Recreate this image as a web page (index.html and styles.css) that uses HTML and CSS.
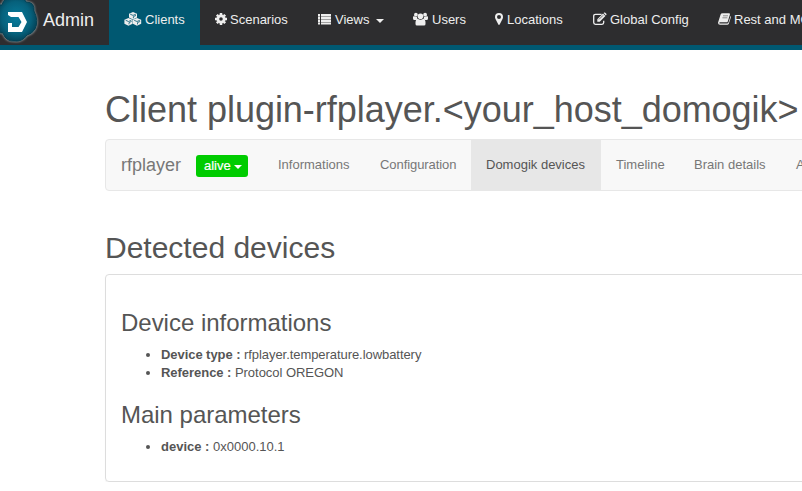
FILE: index.html
```html
<!DOCTYPE html>
<html lang="en">
<head>
<meta charset="utf-8">
<title>Domogik Admin</title>
<link rel="stylesheet" href="styles.css">
</head>
<body>
<header class="topbar">
  <a class="brand">
    <svg class="logo" viewBox="0 0 40 45" width="40" height="45">
      <defs>
        <radialGradient id="fill" cx="50%" cy="48%" r="55%"><stop offset="0" stop-color="#087c9c"/><stop offset=".65" stop-color="#06617c"/><stop offset="1" stop-color="#033e52"/></radialGradient>
        <filter id="glow" x="-20%" y="-20%" width="140%" height="140%"><feGaussianBlur stdDeviation="1.3"/></filter>
      </defs>
      <path d="M-4 7Q0 4 2 5Q4-3 12-3Q23-6 26 2Q35 2 34 11Q39 21 35 29Q32 34 27 35Q22 42 15 41Q6 42 3 33Q-2 33-4 28Z" fill="#99aeb5" stroke="#99a4a8" stroke-width="1.5" filter="url(#glow)"/>
      <path d="M-4 7Q0 4 2 5Q4-3 12-3Q23-6 26 2Q35 2 34 11Q39 21 35 29Q32 34 27 35Q22 42 15 41Q6 42 3 33Q-2 33-4 28Z" fill="url(#fill)" stroke="#043f51"/>
      <path d="M8 12H22L27 22L22 32H8V23H12V27H18.5L21.5 22L18.5 17H11L8 15Z" fill="#fff"/>
    </svg>
    <span>Admin</span>
  </a>
  <nav class="menu">
    <a class="item clients active"><svg width="18" height="14" viewBox="0 0 18 14"><g fill="#eee"><path d="M9 0L13 1.7V5.5L9 7.4L5 5.5V1.7Z"/><path d="M4.5 6L8.6 7.7V11.7L4.5 13.7L.4 11.7V7.7Z"/><path d="M13 6L17.2 7.7V11.7L13 13.7L8.9 11.7V7.7Z"/></g><path d="M6.2 2.2L9 3.4L11.8 2.2M9.4 6.3V4.6L12 3.4M1.7 8.3L4.5 9.5L7.3 8.3M5 12.4V10.6L7.6 9.4M10.2 8.3L13 9.5L15.8 8.3M13.5 12.4V10.6L16.2 9.4" fill="none" stroke="#005871" stroke-width=".8"/></svg><span>Clients</span></a>
    <a class="item scenarios"><svg width="12" height="14" viewBox="0 0 12 14"><circle cx="6" cy="7" r="3.2" fill="none" stroke="#eee" stroke-width="2.8"/><path d="M6 1V3M6 11V13M0 7H2M10 7H12M1.8 2.8L3.2 4.2M8.8 9.8L10.2 11.2M1.8 11.2L3.2 9.8M8.8 4.2L10.2 2.8" stroke="#eee" stroke-width="2.5"/></svg><span>Scenarios</span></a>
    <a class="item views"><svg width="13" height="14" viewBox="0 0 13 14"><path d="M0 2H2V4H0ZM3 2H13V4H3ZM0 5H2V7H0ZM3 5H13V7H3ZM0 8H2V10H0ZM3 8H13V10H3ZM0 11H2V12.5H0ZM3 11H13V12.5H3Z" fill="#eee"/><path d="M0 2H2V12H0ZM3 2H13V12H3Z" fill="#eee" opacity=".6"/></svg><span>Views</span><i class="caret"></i></a>
    <a class="item users"><svg width="15" height="14" viewBox="0 0 15 14"><g fill="#eee"><circle cx="2.9" cy="2.7" r="1.9"/><circle cx="12.1" cy="2.7" r="1.9"/><circle cx="7.5" cy="4.2" r="2.8"/><path d="M0 5Q0 4 1 4.2L4 5Q4 7 5 7.2Q3.5 7.3 3 8H1.5Q0 8 0 6.5ZM15 5Q15 4 14 4.2L11 5Q11 7 10 7.2Q11.5 7.3 12 8H13.5Q15 8 15 6.5ZM5 7Q7.5 8.5 10 7Q12.5 7 12.5 10.5V12Q12.5 13.5 11 13.5H4Q2.5 13.5 2.5 12V10.5Q2.5 7 5 7Z"/></g></svg><span>Users</span></a>
    <a class="item locations"><svg width="8" height="14" viewBox="0 0 8 14"><path fill-rule="evenodd" d="M4 1A4 4 0 0 0 0 5Q0 6 .5 7L3.3 12.6Q4 13.5 4.7 12.6L7.5 7Q8 6 8 5A4 4 0 0 0 4 1ZM4 3A2 2 0 1 1 4 7A2 2 0 0 1 4 3Z" fill="#eee"/></svg><span>Locations</span></a>
    <a class="item config"><svg width="14" height="14" viewBox="0 0 14 14"><path d="M8.6 2.3H2.5Q.7 2.3 .7 4V10.5Q.7 12.3 2.5 12.3H9Q10.7 12.3 10.7 10.5V8.7" fill="none" stroke="#eee" stroke-width="1.3"/><path d="M4.3 7.3L10 1.6L12.4 4L6.7 9.7H4.3ZM10.6 1L11.3.5Q11.8.2 12.3.7L13.3 1.7Q13.8 2.2 13.4 2.8L12.9 3.4Z" fill="#eee"/><path d="M6 7.4L10 3.4" stroke="#2d2d2f" stroke-width=".7"/></svg><span>Global Config</span></a>
    <a class="item rest"><svg width="13" height="14" viewBox="0 0 13 14"><path d="M4.6 1.2H11Q12.3 1.2 11.9 2.5L9.8 9.4Q9.5 10.3 8.5 10.3H2Q1 10.4 1.5 11.4H9.4Q10.2 11.4 10.5 10.6L12.6 4Q13.2 4.3 12.9 5.3L10.8 11.8Q10.4 12.8 9.3 12.8H2Q0 12.8 0 10.8L2.6 2.5Q3 1.2 4.6 1.2Z" fill="#eee"/><path d="M5 3.8H10M4.4 5.8H9.4" stroke="#2d2d2f" stroke-width=".5"/></svg><span>Rest and MQ</span></a>
  </nav>
</header>
<main class="container">
  <h1>Client plugin-rfplayer.&lt;your_host_domogik&gt;</h1>
  <nav class="tabs">
    <span class="name">rfplayer</span>
    <button class="state">alive<i class="caret"></i></button>
    <a class="tab informations">Informations</a>
    <a class="tab configuration">Configuration</a>
    <a class="tab devices active">Domogik devices</a>
    <a class="tab timeline">Timeline</a>
    <a class="tab brain">Brain details</a>
    <a class="tab">Advanced</a>
  </nav>
  <h2>Detected devices</h2>
  <section class="panel">
    <h3>Device informations</h3>
    <ul>
      <li class="type"><b>Device type :</b> rfplayer.temperature.lowbattery</li>
      <li class="reference"><b>Reference :</b> Protocol OREGON</li>
    </ul>
    <h3>Main parameters</h3>
    <ul>
      <li class="address"><b>device :</b> 0x0000.10.1</li>
    </ul>
  </section>
</main>
</body>
</html>
```
FILE: styles.css
```css
* { box-sizing: border-box; }
body {
  margin: 0;
  height: 491px;
  overflow: hidden;
  background: #fff;
  color: #555;
  font: 13px/18px "Liberation Sans", Arial, sans-serif;
}
.topbar {
  display: flex;
  height: 50px;
  overflow: hidden;
  background: #2d2d2f;
  border-bottom: 5px solid #005871;
  color: #eee;
}
.brand {
  display: flex;
  flex: 0 0 109px;
  gap: 3px;
  font-size: 18px;
  line-height: 40px;
}
.logo { flex: none; }
.menu { display: flex; flex: none; }
.item {
  display: flex;
  flex: none;
  padding: 11px 0 0 15px;
  white-space: nowrap;
}
.item svg { flex: none; margin: 1px 3px 0 0; }
.item.active { background: #005871; }
.clients { width: 91px; }
.scenarios { width: 103px; }
.views { width: 95px; }
.users { width: 82px; }
.locations { width: 98px; }
.config { width: 125px; }
.users svg, .locations svg, .views svg { margin-right: 4px; }
.caret {
  align-self: flex-start;
  border: 4px solid transparent;
  border-top-color: currentColor;
  border-bottom: 0;
}
.views .caret { margin: 8px 0 0 7px; }
.container { padding-left: 105px; overflow: hidden; }
h1, h2, h3 { font-weight: 400; white-space: nowrap; }
h1 { margin: 40px 0 9px; font-size: 36px; line-height: 40px; letter-spacing: -.02px; }
.tabs {
  display: flex;
  width: 1140px;
  height: 52px;
  background: #f8f8f8;
  border: 1px solid #e7e7e7;
  border-radius: 4px;
  color: #777;
}
.name { width: 90px; padding-left: 15px; font-size: 18px; line-height: 50px; }
.state {
  display: flex;
  width: 52px;
  height: 22px;
  margin: 15px 15px 0 0;
  padding: 0 0 0 8px;
  border: 0;
  border-radius: 3px;
  background: #00cc00;
  color: #fff;
  font: 13px/22px "Liberation Sans", Arial, sans-serif;
  -webkit-text-stroke: .2px #fff;
}
.state .caret { margin: 10px 0 0 3px; }
.tab { flex: none; padding-left: 15px; line-height: 50px; white-space: nowrap; }
.tab.active { background: #e7e7e7; color: #555; }
.informations { width: 102px; }
.configuration { width: 106px; letter-spacing: -.07px; }
.devices { width: 130px; }
.timeline { width: 78px; }
.brain { width: 102px; }
h2 { margin: 40px 0 10px; font-size: 30px; line-height: 33px; }
.panel {
  width: 1140px;
  height: 208px;
  padding: 15px;
  border: 1px solid #ddd;
  border-radius: 4px;
  box-shadow: 0 1px 1px rgba(0, 0, 0, .05);
}
h3 { margin: 20px 0 10px; font-size: 24px; line-height: 26px; letter-spacing: -.02px; }
ul { margin: 0 0 9px; padding-left: 40px; }
.type { letter-spacing: -.06px; }
.reference { letter-spacing: -.04px; }
```
